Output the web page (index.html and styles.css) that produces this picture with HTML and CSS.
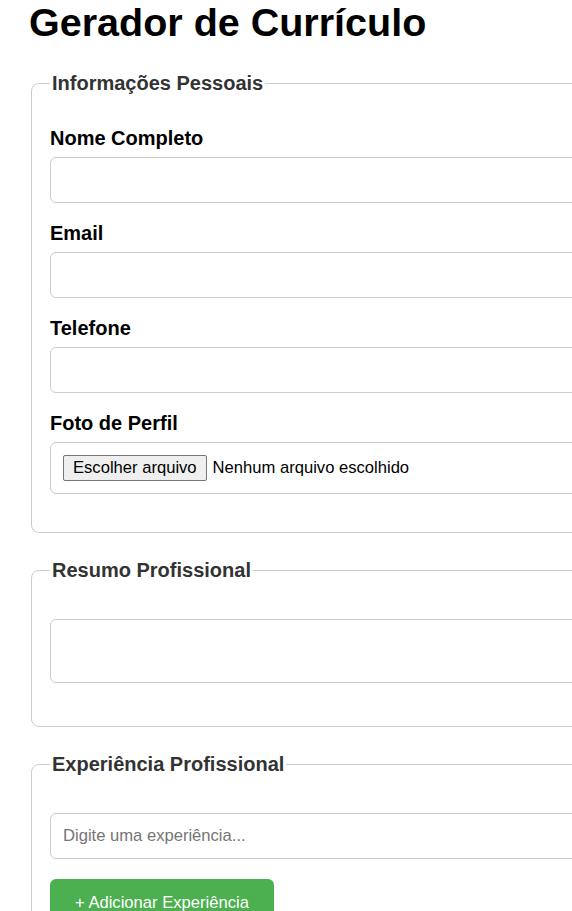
FILE: index.html
```html
<!DOCTYPE html>
<html lang="pt-BR">
<head>
<meta charset="utf-8">
<title>Gerador de Currículo</title>
<link rel="stylesheet" href="styles.css">
</head>
<body>
<div class="container">
  <h1 class="title">Gerador de Currículo</h1>

  <fieldset class="section">
    <legend class="section-title">Informações Pessoais</legend>
    <div class="form-group">
      <label class="field-label" for="nome">Nome Completo</label>
      <input class="field-input" type="text" id="nome">
    </div>
    <div class="form-group">
      <label class="field-label" for="email">Email</label>
      <input class="field-input" type="email" id="email">
    </div>
    <div class="form-group">
      <label class="field-label" for="tel">Telefone</label>
      <input class="field-input" type="tel" id="tel">
    </div>
    <div class="form-group">
      <label class="field-label">Foto de Perfil</label>
      <div class="file-box">
        <span class="file-button">Escolher arquivo</span>
        <span class="file-text">Nenhum arquivo escolhido</span>
      </div>
    </div>
  </fieldset>

  <fieldset class="section">
    <legend class="section-title">Resumo Profissional</legend>
    <div class="form-group spaced tall">
      <textarea class="field-input field-textarea"></textarea>
    </div>
  </fieldset>

  <fieldset class="section">
    <legend class="section-title">Experiência Profissional</legend>
    <div class="form-group spaced">
      <input class="field-input" type="text" placeholder="Digite uma experiência...">
    </div>
    <button class="add-button" type="button">+ Adicionar Experiência</button>
  </fieldset>
</div>
</body>
</html>
```

FILE: styles.css
```css
html {
  overflow: hidden;
}

body {
  margin: 0;
  font-family: "Liberation Sans", Arial, sans-serif;
  color: #000;
  background: #fff;
}

.container {
  width: 800px;
  padding: 0 0 0 29px;
}

.title {
  margin: 0 0 28px 0;
  font-size: 39.5px;
  line-height: 44px;
  font-weight: bold;
}

.section {
  margin: 0 2px 26px 2px;
  padding: 33px 18px 18px 18px;
  border: 1px solid #ccc;
  border-radius: 8px;
}

.section-title {
  padding: 0 2px;
  font-size: 20px;
  line-height: 23px;
  font-weight: bold;
  color: #333;
}

.form-group {
  margin-bottom: 20px;
}

.form-group.spaced {
  padding-top: 4px;
}

.form-group.tall {
  margin-bottom: 21px;
}

.field-label {
  display: block;
  margin-bottom: 8px;
  font-size: 20px;
  line-height: 21px;
  font-weight: bold;
}

.field-input {
  box-sizing: border-box;
  width: 100%;
  height: 46px;
  padding: 12px;
  border: 1px solid #ccc;
  border-radius: 6px;
  font-family: "Liberation Sans", Arial, sans-serif;
  font-size: 16.6px;
  color: #000;
  background: #fff;
}

.field-input::placeholder {
  color: #757575;
}

.field-textarea {
  height: 64px;
  resize: none;
}

.file-box {
  display: flex;
  align-items: center;
  box-sizing: border-box;
  height: 52px;
  padding: 12px;
  border: 1px solid #ccc;
  border-radius: 6px;
  font-size: 16.6px;
}

.file-button {
  display: inline-block;
  box-sizing: border-box;
  height: 26px;
  line-height: 22px;
  padding: 1px 9px;
  margin-right: 6px;
  border: 1px solid #767676;
  border-radius: 2px;
  background: #efefef;
  color: #000;
}

.file-text {
  color: #000;
}

.add-button {
  padding: 12px 25px;
  border: none;
  border-radius: 6px;
  background: #4caf50;
  color: #fff;
  font-family: "Liberation Sans", Arial, sans-serif;
  font-size: 16.6px;
  line-height: 24px;
}
```
